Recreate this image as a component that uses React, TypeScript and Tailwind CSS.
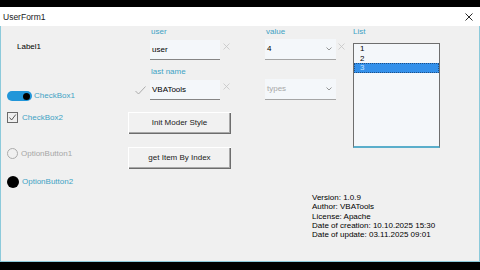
import React from 'react';

const teal = 'text-[#3ea2c4]';

const CrossMark: React.FC<{ className?: string }> = ({ className }) => (
    <svg width="7" height="7" viewBox="0 0 7 7" className={className}>
        <path d="M0.5 0.5 L6.5 6.5 M6.5 0.5 L0.5 6.5" stroke="#c4c4c4" strokeWidth="0.8" fill="none" />
    </svg>
);

const Chevron: React.FC = () => (
    <svg width="6" height="4" viewBox="0 0 6 4">
        <path d="M0.5 0.5 L3 3 L5.5 0.5" stroke="#8a8a8a" strokeWidth="0.9" fill="none" />
    </svg>
);

const TextBox: React.FC<{ value: string }> = ({ value }) => (
    <div className="w-[70px] h-[20px] bg-[#f4f7fa] border-b border-[#858585] flex items-center pl-[2px] text-black">
        {value}
    </div>
);

const ComboBox: React.FC<{ value: string; placeholder?: boolean }> = ({ value, placeholder }) => (
    <div className="w-[71px] h-[21px] bg-[#f4f7fa] border-b border-[#a5a5a5] flex items-center justify-between pl-[2px] pr-[4px]">
        <span className={placeholder ? 'text-[#a8a8a8]' : 'text-black'}>{value}</span>
        <Chevron />
    </div>
);

const FormButton: React.FC<{ label: string; className?: string }> = ({ label, className }) => (
    <button className={`w-[103px] h-[22px] bg-[#f1f1f1] text-[#1a1a1a] font-normal flex items-center justify-center shadow-[inset_1px_1px_#ffffff,inset_-1px_-1px_#6d6d6d,inset_-2px_-2px_#a9a9a9] ${className ?? ''}`}>
        {label}
    </button>
);

const App: React.FC = () => {
    const listItems = ['1', '2', '3'];
    const info = [
        'Version: 1.0.9',
        'Author: VBATools',
        'License: Apache',
        'Date of creation: 10.10.2025 15:30',
        'Date of update: 03.11.2025 09:01',
    ];

    return (
        <div className="w-[480px] h-[270px] bg-black flex flex-col pt-[7px] pb-[8px] font-['Liberation_Sans',Arial,sans-serif] text-[8px] leading-[10px]">
            {/* title bar */}
            <div className="h-[19px] bg-white flex items-center justify-between pl-[3px] pr-[7px] text-[#1a1a1a] text-[8.5px]">
                <span>UserForm1</span>
                <svg width="8" height="8" viewBox="0 0 8 8">
                    <path d="M0.5 0.5 L7.5 7.5 M7.5 0.5 L0.5 7.5" stroke="#111" strokeWidth="0.9" fill="none" />
                </svg>
            </div>

            {/* body */}
            <div className="flex-1 bg-[#f0f0f0] border-x border-b border-[#8ccadb] flex flex-col">
                <div className="flex">
                    {/* left column */}
                    <div className="w-[127px] flex flex-col pl-[6px]">
                        <span className="mt-[16px] ml-[10px] text-black">Label1</span>
                        <div className="mt-[39px] h-[10px] flex items-center gap-[2px]">
                            <div className="w-[25px] h-[10px] rounded-full bg-[#2196d9] flex items-center justify-end pr-[2px]">
                                <div className="w-[7px] h-[7px] rounded-full bg-black" />
                            </div>
                            <span className={teal}>CheckBox1</span>
                        </div>
                        <div className="mt-[11px] h-[11px] flex items-center gap-[4px]">
                            <div className="w-[11px] h-[11px] border border-[#6a6a6a] flex items-center justify-center">
                                <svg width="9" height="9" viewBox="0 0 9 9">
                                    <path d="M1.5 4.5 L3.6 7 L7.8 1.5" stroke="#4a4a4a" strokeWidth="0.9" fill="none" />
                                </svg>
                            </div>
                            <span className={teal}>CheckBox2</span>
                        </div>
                        <div className="mt-[25px] h-[11px] flex items-center gap-[3px]">
                            <div className="w-[11px] h-[11px] rounded-full border border-[#ababab]" />
                            <span className="text-[#a6a6a6]">OptionButton1</span>
                        </div>
                        <div className="mt-[17px] h-[12px] flex items-center gap-[3px]">
                            <div className="w-[12px] h-[12px] rounded-full bg-black" />
                            <span className={teal}>OptionButton2</span>
                        </div>
                    </div>

                    {/* text boxes and buttons */}
                    <div className="w-[103px] flex flex-col">
                        <span className={`mt-[1px] pl-[23px] ${teal}`}>user</span>
                        <div className="mt-[3px] flex items-center">
                            <div className="w-[22px]" />
                            <TextBox value="user" />
                            <CrossMark className="ml-[3px] mb-[7px]" />
                        </div>
                        <span className={`mt-[7px] pl-[23px] ${teal}`}>last name</span>
                        <div className="mt-[3px] flex items-center">
                            <div className="w-[22px] flex justify-end pr-[4px]">
                                <svg width="11" height="9" viewBox="0 0 11 9">
                                    <path d="M0.5 5 L3.5 8 L10.5 0.5" stroke="#a3a3a3" strokeWidth="0.9" fill="none" />
                                </svg>
                            </div>
                            <TextBox value="VBATools" />
                            <CrossMark className="ml-[3px] mb-[7px]" />
                        </div>
                        <FormButton label="Init Moder Style" className="mt-[12px]" />
                        <FormButton label="get Item By Index" className="mt-[13px]" />
                    </div>

                    {/* combo boxes */}
                    <div className="ml-[34px] w-[88px] flex flex-col">
                        <span className={`mt-[1px] pl-[1px] ${teal}`}>value</span>
                        <div className="mt-[2px] flex items-center">
                            <ComboBox value="4" />
                            <CrossMark className="ml-[2px] mb-[7px]" />
                        </div>
                        <div className="mt-[19px]">
                            <ComboBox value="types" placeholder />
                        </div>
                    </div>

                    {/* list */}
                    <div className="w-[87px] flex flex-col">
                        <span className={`mt-[1px] ${teal}`}>List</span>
                        <div className="mt-[6px] h-[105px] bg-[#f4f7fa] border border-[#6e6e6e] border-b-2 border-b-[#5aaecb] flex flex-col">
                            {listItems.map((item, i) => (
                                <div
                                    key={item}
                                    className={
                                        i === 2
                                            ? 'h-[9.5px] leading-[9.5px] pl-[6px] bg-[#3390ea] text-[#c4e4ff] outline-1 outline-dotted outline-[#1d4f86] -outline-offset-1'
                                            : 'h-[9.5px] leading-[9.5px] pl-[6px] text-black'
                                    }
                                >
                                    {item}
                                </div>
                            ))}
                        </div>
                    </div>
                </div>

                {/* info */}
                <div className="mt-[5px] ml-[311px] flex flex-col text-black leading-[9.3px]">
                    {info.map((line) => (
                        <span key={line}>{line}</span>
                    ))}
                </div>
            </div>
        </div>
    );
};

export default App;
